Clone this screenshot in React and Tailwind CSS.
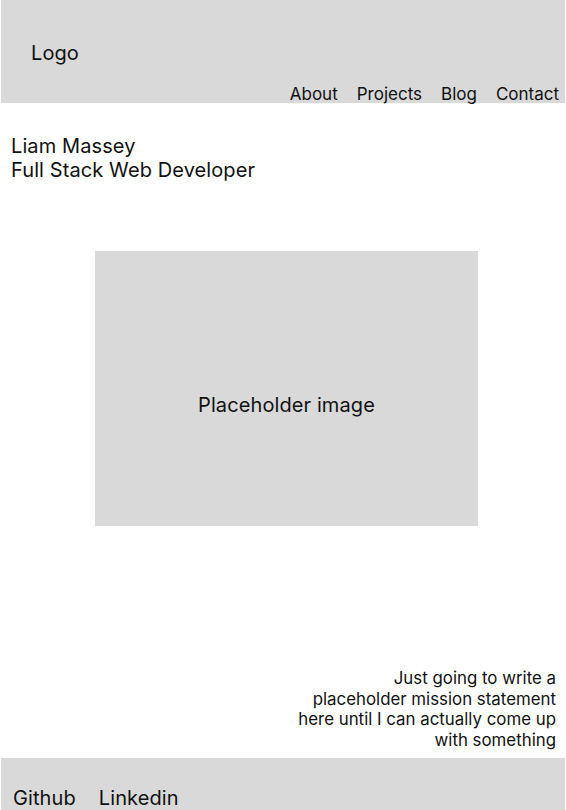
export default function App() {
  return (
    <div className="w-[566px] h-[810px] overflow-hidden bg-white text-[#111] flex flex-col tracking-[0.1px]" style={{ fontFamily: 'Inter, "Liberation Sans", sans-serif' }}>
      <header className="mx-px h-[103px] bg-[#d9d9d9] flex flex-col justify-between shrink-0">
        <div className="pl-[30px] pt-[40px] text-[20px] leading-[26px]">Logo</div>
        <nav className="flex justify-end gap-[19px] pr-[6px] text-[17px] leading-[20px] tracking-normal translate-y-[1px]">
          <span>About</span>
          <span>Projects</span>
          <span>Blog</span>
          <span>Contact</span>
        </nav>
      </header>
      <section className="pl-[11px] pt-[31px] text-[20px] leading-[24px]">
        <div>Liam Massey</div>
        <div>Full Stack Web Developer</div>
      </section>
      <div className="pl-[95px] pt-[69px]">
        <div className="w-[383px] h-[275px] bg-[#d9d9d9] flex items-center justify-center pt-[32px] text-[20px]">
          Placeholder image
        </div>
      </div>
      <p className="mt-[142px] ml-auto mr-[10px] text-right text-[16.85px] leading-[20.5px] tracking-normal">
        Just going to write a<br />
        placeholder mission statement<br />
        here until I can actually come up<br />
        with something
      </p>
      <footer className="mx-px mt-[8px] flex-1 bg-[#d9d9d9] flex items-end gap-[23px] pl-[12px] text-[20px] leading-[24px]">
        <span>Github</span>
        <span>Linkedin</span>
      </footer>
    </div>
  );
}
